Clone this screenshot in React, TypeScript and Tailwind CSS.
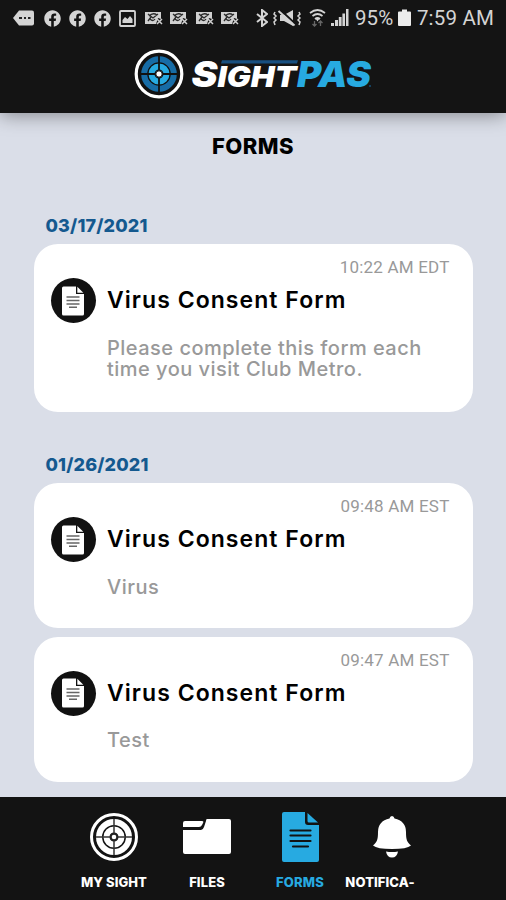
import { FaFacebook } from "react-icons/fa";

const groups = [
  {
    date: "03/17/2021",
    forms: [
      {
        time: "10:22 AM EDT",
        title: "Virus Consent Form",
        lines: ["Please complete this form each", "time you visit Club Metro."],
      },
    ],
  },
  {
    date: "01/26/2021",
    forms: [
      { time: "09:48 AM EST", title: "Virus Consent Form", lines: ["Virus"] },
      { time: "09:47 AM EST", title: "Virus Consent Form", lines: ["Test"] },
    ],
  },
];

function MailError() {
  return (
    <svg width="18" height="16" viewBox="0 0 18 16">
      <path d="M0 2h16v7l-3-1-2 6H0z" fill="#d0d0d0" />
      <path d="M3 4l5 4 5-4M3 11l3-4M4 6q4-4 8-1M5 9q3 3 5 0" stroke="#2a2a2a" strokeWidth="1.3" fill="none" />
      <path d="M12 9l5 5m0-5l-5 5" stroke="#d0d0d0" strokeWidth="1.5" />
    </svg>
  );
}

function StatusBar() {
  return (
    <div className="flex h-9 items-center pl-[13px] font-['Roboto',sans-serif] text-[#d4d4d4]">
      <svg width="21" height="16" viewBox="0 0 21 16" className="mr-[10px]">
        <path d="M6 .5h13q2 0 2 2v11q0 2-2 2H6L0 8z" fill="currentColor" />
        <path d="M6 8h3m2 0h2m2 0h2.500" stroke="#222" strokeWidth="2.200" />
      </svg>
      <div className="mr-2 flex gap-2">
        <FaFacebook size={17} />
        <FaFacebook size={17} />
        <FaFacebook size={17} />
      </div>
      <svg width="17" height="17" viewBox="0 0 17 17" className="mr-[9px]">
        <rect x="1" y="1" width="15" height="15" rx="1" stroke="currentColor" strokeWidth="1.800" fill="none" />
        <path d="M3.500 13V10l2.500-3 2.500 2L11 6l2.500 3v4z" fill="currentColor" />
      </svg>
      <div className="mr-[10px] flex gap-[7.300px]">
        <MailError />
        <MailError />
        <MailError />
        <MailError />
      </div>
      <svg width="12" height="18" viewBox="0 0 12 18" className="ml-[7px] mr-[5px]">
        <path d="M1 5l10 8-5 4V1l5 4-10 8" stroke="currentColor" strokeWidth="2" fill="none" />
      </svg>
      <svg width="28" height="18" viewBox="0 0 28 18" className="mr-[8px]">
        <path d="M2 3l-1 2 2 2-2 2 2 2-2 2 1 3M26 3l1 2-2 2 2 2-2 2 2 2-1 3" stroke="currentColor" strokeWidth="1.500" fill="none" />
        <path d="M7 6h4l9-5v16l-9-5H7z" fill="currentColor" />
        <path d="M7.500 1l15 14" stroke="#141414" strokeWidth="2" />
        <path d="M5.500 2l16 14.500" stroke="currentColor" strokeWidth="2" />
      </svg>
      <svg width="17" height="18" viewBox="0 0 17 18" className="mr-[5px]">
        <path d="M1 4q7.500-6 15 0M3.500 7q5-4 10 0M6 10q2.500-2 5 0" stroke="currentColor" strokeWidth="1.700" fill="none" />
        <path d="M6.500 9.500h4l-2 3z" fill="currentColor" />
        <path d="M5.500 12v5m-2-2l2 2 2-2M11.500 17v-5m-2 2l2-2 2 2" stroke="#666" strokeWidth="1.300" fill="none" />
      </svg>
      <svg width="18" height="18" viewBox="0 0 18 18" className="mr-[6px]">
        <path d="M0 17v-3h3v3zM4 17v-6h3v6zM7.800 17V8h2.800v9zM11.400 17V4.500h2.600v12.500zM15 17V0h2.500v17z" fill="currentColor" />
      </svg>
      <span className="w-[43px] whitespace-nowrap text-[20.500px] tracking-[0.2px]">95%</span>
      <svg width="13" height="18" viewBox="0 0 13 18" className="mr-[6px]">
        <path d="M1 2.500h3V.5h5v2h3q1 0 1 1V16q0 1-1 1H1q-1 0-1-1V3.500q0-1 1-1z" fill="#ececec" />
      </svg>
      <span className="whitespace-nowrap text-[20.500px] tracking-[0.2px]">7:59 AM</span>
    </div>
  );
}

function Logo() {
  return (
    <svg width="240" height="52" viewBox="0 0 240 52">
      <circle cx="25" cy="26" r="22.800" fill="#111" stroke="#fff" strokeWidth="3.200" />
      <circle cx="25" cy="26" r="14.800" fill="none" stroke="#176ca6" strokeWidth="6" />
      <circle cx="25" cy="26" r="7.500" fill="none" stroke="#27aae1" strokeWidth="6" />
      <path d="M25 8v36M7 26h36" stroke="#111" strokeWidth="1.800" />
      <circle cx="25" cy="26" r="3.200" fill="#fff" stroke="#111" />
      <path d="M88 12.300h76l-1 3.200H87z" fill="#174f80" />
      <g fontFamily="Inter, sans-serif" fontWeight="900" fontStyle="italic">
        <text x="57.500" y="38.500" fontSize="35" fill="#fff" textLength="26" lengthAdjust="spacingAndGlyphs">S</text>
        <text x="83.500" y="38.500" fontSize="28" fill="#fff" textLength="79" lengthAdjust="spacingAndGlyphs">IGHT</text>
        <text x="163" y="38.500" fontSize="35" fill="#27aae1" textLength="74" lengthAdjust="spacingAndGlyphs">PAS</text>
      </g>
      <path d="M235 38h2" stroke="#176ca6" />
    </svg>
  );
}

function DocIcon() {
  return (
    <div className="flex size-[45px] shrink-0 items-center justify-center rounded-full bg-[#111]">
      <svg width="22" height="30" viewBox="0 0 22 30">
        <path d="M1.500.5H14v7.500h8v20q0 1.500-1.500 1.500h-19Q0 29.500 0 28V2Q0 .5 1.500.5z" fill="#fff" />
        <path d="M15.300.8v5.900h6z" fill="#fff" />
        <path d="M4.500 11h13M4.500 14.500h13M4.500 18h13M7 21.300h8" stroke="#666" strokeWidth="1.500" />
      </svg>
    </div>
  );
}

function FormCard({ form }: { form: (typeof groups)[0]["forms"][0] }) {
  return (
    <div className={`rounded-[24px] bg-white pl-[17px] pr-[23px] pt-[13px] ${form.lines.length > 1 ? "h-[168px]" : "h-[145px]"}`}>
      <div className="h-[21px] text-right font-['Roboto',sans-serif] text-[17px] leading-[21px] tracking-[0.2px] text-[#999]">{form.time}</div>
      <div className="flex h-[45px] items-center gap-[11.500px]">
        <DocIcon />
        <h2 className="whitespace-nowrap text-[23px] font-semibold tracking-[1.050px] text-black">{form.title}</h2>
      </div>
      <div className="ml-[56.500px] mt-[14.500px] text-[20px] font-medium leading-[21px] tracking-[0.480px] text-[#999]">
        {form.lines.map((line) => (
          <p key={line} className="whitespace-nowrap">{line}</p>
        ))}
      </div>
    </div>
  );
}

function NavBar() {
  return (
    <nav className="flex h-[103px] shrink-0 bg-[#131313] pl-[67.500px] pt-[15px] text-[13px] font-extrabold text-white">
      <div className="flex w-[93px] flex-col items-center">
        <svg width="50" height="50" viewBox="0 0 50 50" fill="none" stroke="#fff">
          <circle cx="25" cy="25" r="22.500" strokeWidth="3" />
          <circle cx="25" cy="25" r="15" strokeWidth="6" />
          <circle cx="25" cy="25" r="7.500" strokeWidth="6" />
          <path d="M25 7v36M7 25h36" stroke="#333" strokeWidth="1.500" />
          <circle cx="25" cy="25" r="3.200" fill="#fff" stroke="#222" strokeWidth="1.800" />
        </svg>
        <span className="mt-[10px] whitespace-nowrap leading-5 tracking-[0.050px]">MY SIGHT</span>
      </div>
      <div className="flex w-[93px] flex-col items-center">
        <svg width="50" height="50" viewBox="0 0 50 50" fill="#fff">
          <path d="M3 9h17q2 0 1 2l-1 2q-1 2-3 2H1v-4q0-2 2-2z" />
          <path d="M25 7h22q2 0 2 2v31q0 2-2 2H3q-2 0-2-2V18h18q2 0 3-3l2-6q0-2 1-2z" />
        </svg>
        <span className="mt-[10px] whitespace-nowrap leading-5 tracking-[0.100px]">FILES</span>
      </div>
      <div className="flex w-[93px] flex-col items-center text-[#27aae1]">
        <svg width="37" height="50" viewBox="0 0 37 50" fill="currentColor">
          <path d="M2 0h21v10q0 3 3 3h11v35q0 2-2 2H2q-2 0-2-2V2q0-2 2-2z" />
          <path d="M25.500 1v8q0 1.500 1.500 1.500h9z" />
          <path d="M8.500 18.500h20M8.500 23.500h20M8.500 29h20M11 34.500h15" stroke="#131313" strokeWidth="2.200" strokeLinecap="round" />
        </svg>
        <span className="mt-[10px] whitespace-nowrap leading-5 tracking-[0.200px]">FORMS</span>
      </div>
      <div className="flex w-[93px] flex-col items-center">
        <svg width="38" height="50" viewBox="0 0 38 50" fill="#fff" className="-ml-[2px]">
          <path d="M19 4q2 0 2.500 2.500Q33 9 33 20c0 8 1 10 5 13.500Q34 37 19 37T0 33.500C4 30 5 28 5 20Q5 9 16.500 6.500 17 4 19 4z" />
          <path d="M13 39.500q6 1 12 0-1 6-6 6t-6-6z" />
        </svg>
        <span className="mr-[26px] mt-[10px] whitespace-nowrap leading-5 tracking-[0.100px]">NOTIFICA-</span>
      </div>
    </nav>
  );
}

export default function App() {
  return (
    <div className="flex h-[900px] w-[506px] flex-col overflow-hidden bg-[#dadee8] font-['Inter',sans-serif]">
      <header className="z-10 h-[113px] shrink-0 bg-[#141414] shadow-[0_2px_18px_rgba(0,0,0,0.4)]">
        <StatusBar />
        <div className="pl-[134px] pt-3">
          <Logo />
        </div>
      </header>
      <main className="min-h-0 flex-1 overflow-hidden px-[33.500px] pt-[21px]">
        <h1 className="h-6 text-center text-[22px] font-extrabold leading-6 tracking-[0.500px] text-black">FORMS</h1>
        {groups.map((group, i) => (
          <section key={group.date} className={i === 0 ? "mt-[56px]" : "mt-[41px]"}>
            <div className="h-[30px] pl-3 text-[18px] font-extrabold leading-6 tracking-[0.150px] text-[#14598f]">{group.date}</div>
            <div className="flex flex-col gap-[8.500px]">
              {group.forms.map((form) => (
                <FormCard key={form.time} form={form} />
              ))}
            </div>
          </section>
        ))}
      </main>
      <NavBar />
    </div>
  );
}
